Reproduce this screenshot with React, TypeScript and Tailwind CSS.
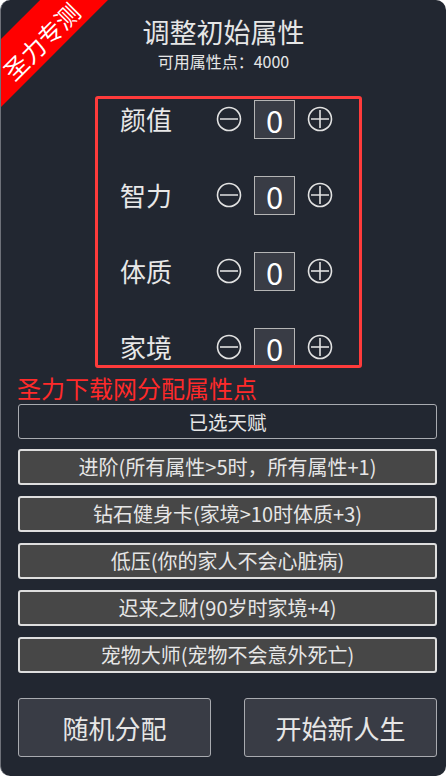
import React from "react";

const font = { fontFamily: '"Noto Sans CJK SC", "Noto Sans", sans-serif' };

function CircleIcon({ plus }: { plus?: boolean }) {
  return (
    <svg width="26" height="26" viewBox="0 0 26 26" className="shrink-0">
      <circle cx="13" cy="13" r="11.5" fill="none" stroke="#e2e2e2" strokeWidth="1.6" />
      <line x1="4" y1="13" x2="22" y2="13" stroke="#e2e2e2" strokeWidth="1.6" />
      {plus && <line x1="13" y1="4" x2="13" y2="22" stroke="#e2e2e2" strokeWidth="1.6" />}
    </svg>
  );
}

const attrs = ["颜值", "智力", "体质", "家境"];
const talents = [
  "进阶(所有属性>5时，所有属性+1)",
  "钻石健身卡(家境>10时体质+3)",
  "低压(你的家人不会心脏病)",
  "迟来之财(90岁时家境+4)",
  "宠物大师(宠物不会意外死亡)",
];

export default function App() {
  return (
    <div className="w-[446px] h-[776px] bg-white" style={font}>
      <div className="relative w-full h-full overflow-hidden rounded-[10px] bg-[#222731] border-l border-[#6e7179] flex flex-col">
        {/* ribbon */}
        <div className="absolute left-[-64px] top-[13px] w-[200px] h-[48px] bg-[#ff0000] -rotate-45 flex justify-center pt-[18px] text-white text-[24px] leading-[24px]">
          圣力专测
        </div>

        <div className="pt-[15px] flex flex-col items-center text-[#e6e6e6]">
          <div className="text-[27px] leading-[34px]">调整初始属性</div>
          <div className="text-[16px] leading-[20px] mt-[2px]">可用属性点：4000</div>
        </div>

        <div className="ml-[94px] mt-[25px] w-[267px] h-[272px] border-[3px] border-[#ff3b3b] rounded-[3px] flex flex-col gap-[36px] overflow-hidden">
          {attrs.map((a) => (
            <div key={a} className="flex items-center h-[40px] shrink-0">
              <div className="ml-[22px] w-[54px] text-[26px] leading-none text-[#e8e8e8]">{a}</div>
              <div className="ml-[42px]">
                <CircleIcon />
              </div>
              <div className="ml-[12px] w-[41px] h-[39px] border border-[#b5b5b5] bg-[#393c45] flex items-center justify-center text-[31px] leading-[37px] text-white">
                0
              </div>
              <div className="ml-[12px]">
                <CircleIcon plus />
              </div>
            </div>
          ))}
        </div>

        <div className="ml-[16px] mt-[6px] text-[24px] leading-[28px] text-[#ff2a2a]">圣力下载网分配属性点</div>

        <div className="ml-[17px] w-[419px] mt-[2px] flex flex-col">
          <div className="h-[35px] border border-[#a9abb0] rounded-[3px] flex items-center justify-center text-[19.5px] text-[#e6e6e6]">
            已选天赋
          </div>
          <div className="mt-[10px] flex flex-col gap-[11px]">
            {talents.map((t) => (
              <div
                key={t}
                className="h-[36px] border-2 border-[#dedede] rounded-[3px] bg-[#474747] flex items-center justify-center text-[20px] text-[#e6e6e6] whitespace-nowrap"
              >
                {t}
              </div>
            ))}
          </div>
        </div>

        <div className="ml-[17px] w-[419px] mt-[25px] flex gap-[33px]">
          <div className="flex-1 h-[59px] border border-[#a9abb0] rounded-[3px] bg-[#393c45] flex items-center justify-center text-[26px] text-[#e6e6e6]">
            随机分配
          </div>
          <div className="flex-1 h-[59px] border border-[#a9abb0] rounded-[3px] bg-[#393c45] flex items-center justify-center text-[26px] text-[#e6e6e6]">
            开始新人生
          </div>
        </div>
      </div>
    </div>
  );
}
